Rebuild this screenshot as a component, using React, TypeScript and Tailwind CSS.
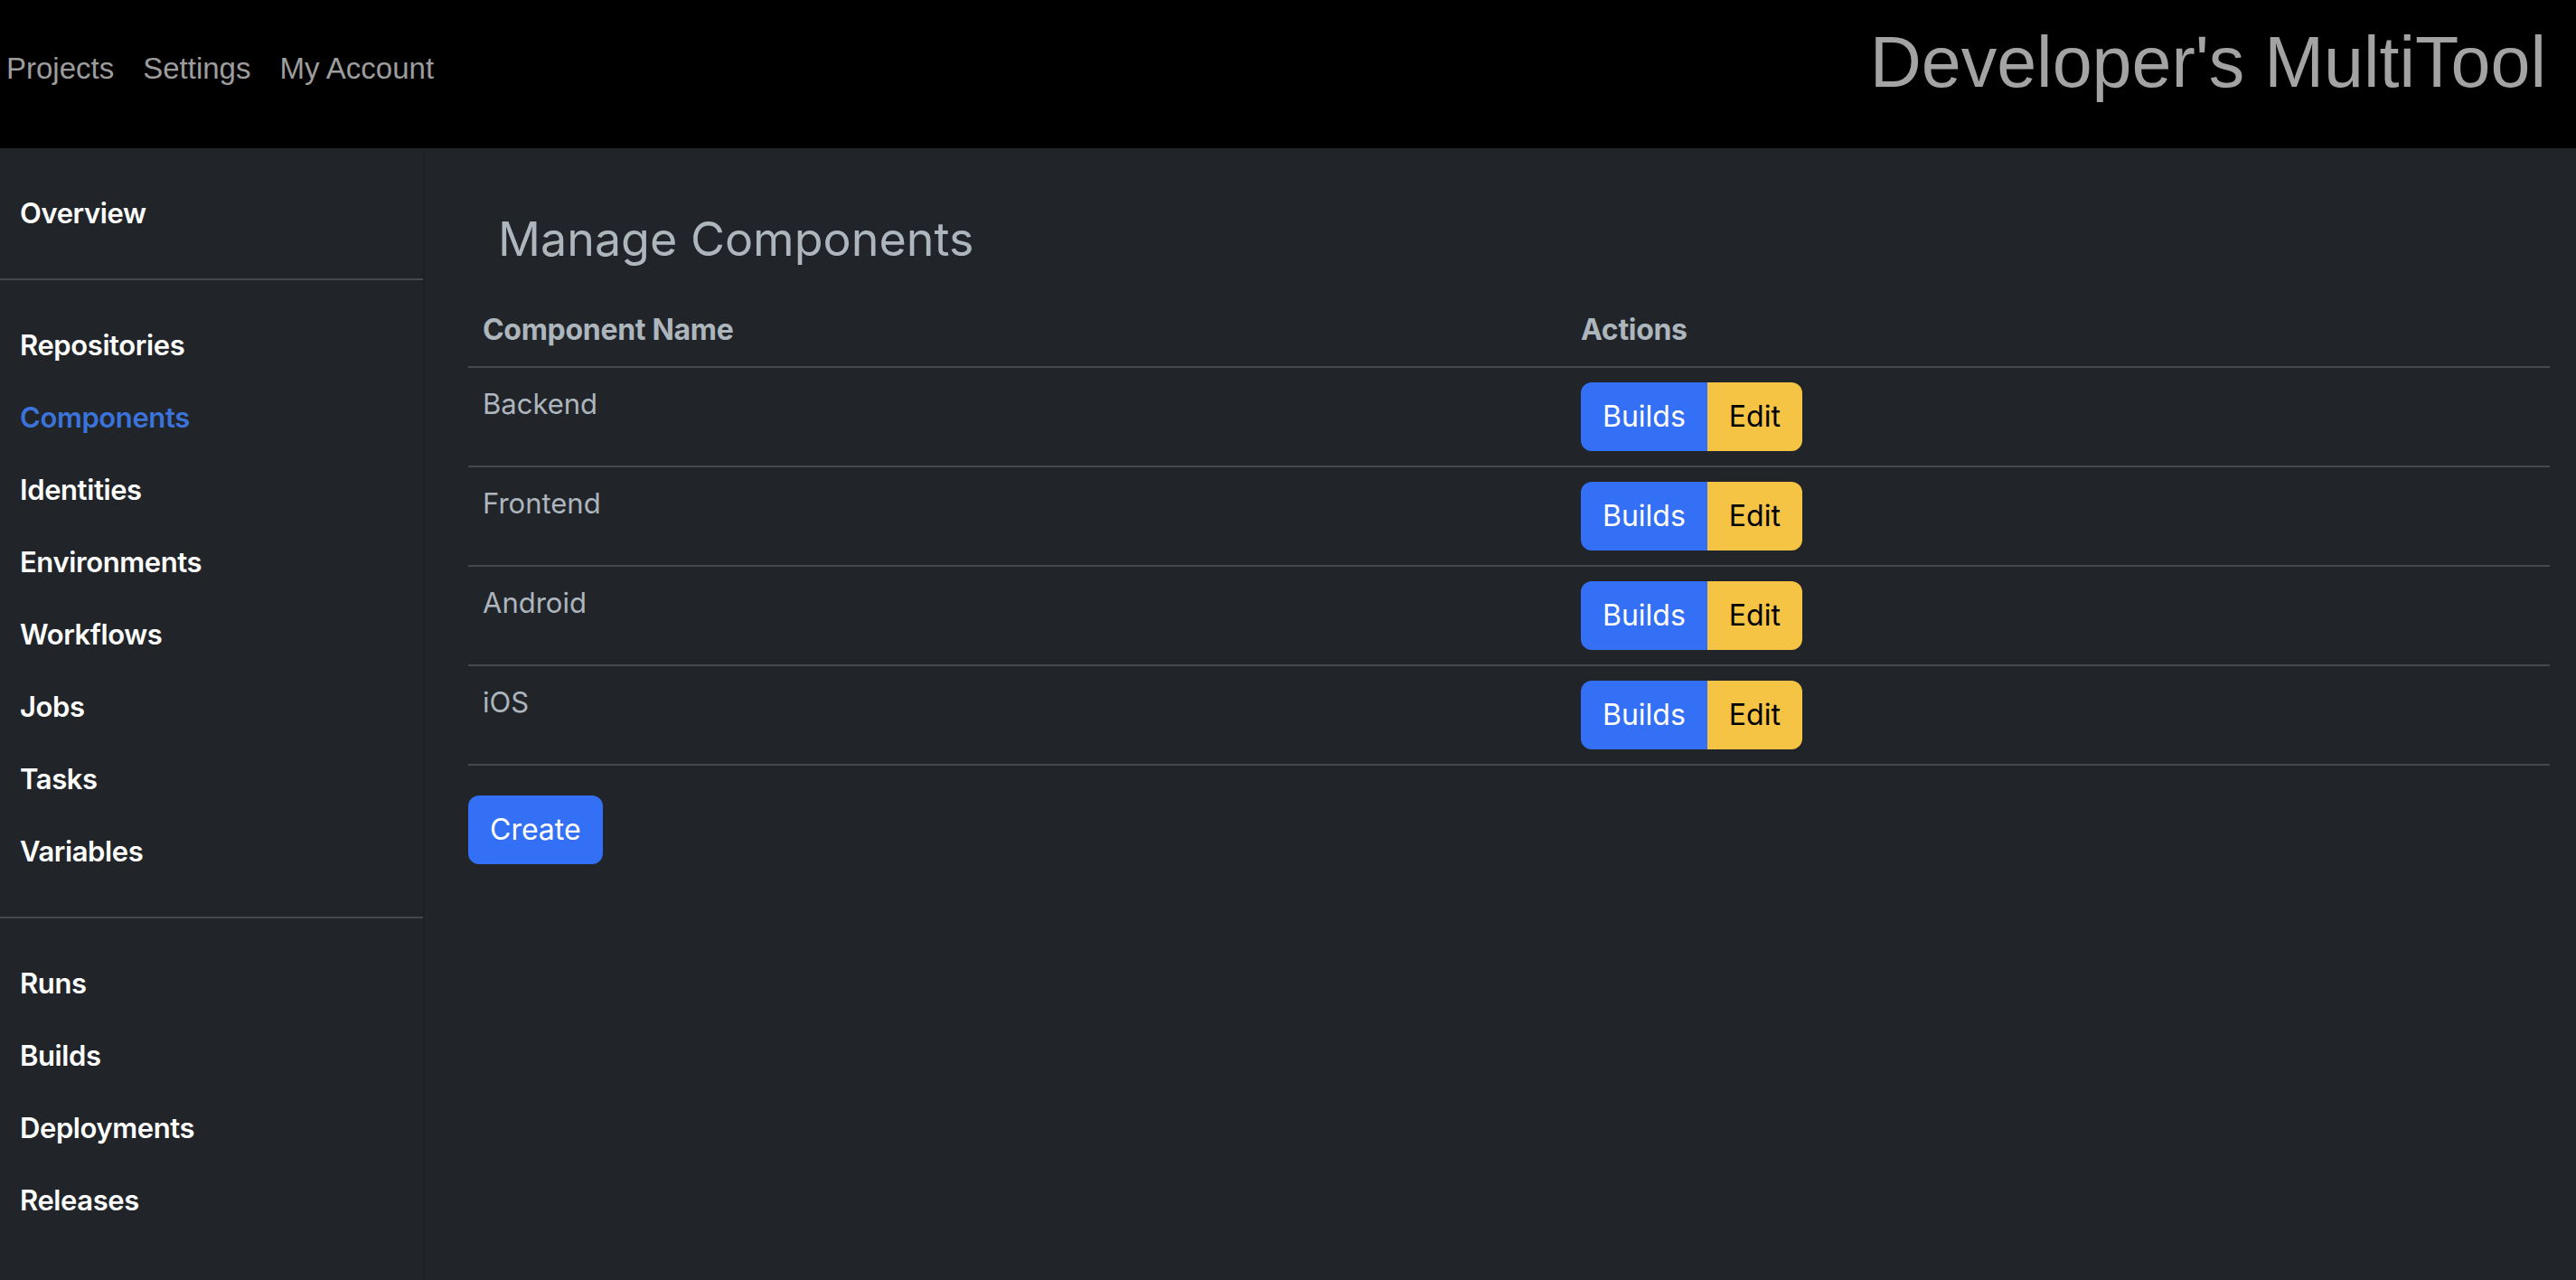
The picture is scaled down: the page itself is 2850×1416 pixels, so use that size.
import React from 'react';

const NAV = ['Projects', 'Settings', 'My Account'];

const SIDEBAR_GROUPS = [
  ['Overview'],
  ['Repositories', 'Components', 'Identities', 'Environments', 'Workflows', 'Jobs', 'Tasks', 'Variables'],
  ['Runs', 'Builds', 'Deployments', 'Releases'],
];

const COMPONENTS = ['Backend', 'Frontend', 'Android', 'iOS'];

const sans = "font-['Inter','Noto_Sans',sans-serif]";
const helv = "font-['Liberation_Sans','Arial',sans-serif]";

export default function App() {
  const active = 'Components';

  return (
    <div className="min-h-[1416px] flex flex-col bg-[#212529]">
      <header className={`h-[164px] bg-black flex items-start justify-between ${helv}`}>
        <nav className="flex gap-[32px] pl-[7px] pt-[56px]">
          {NAV.map((n) => (
            <a key={n} className="text-[33px] leading-[40px] text-[#9d9d9d]">
              {n}
            </a>
          ))}
        </nav>
        <div className="pt-[24px] pr-[33px] text-[79px] leading-[90px] text-[#a3a3a3]">
          Developer's MultiTool
        </div>
      </header>

      <div className={`flex flex-1 ${sans}`}>
        <aside className="w-[470px] shrink-0 border-r-2 border-[#1d2024] pt-[32px]">
          {SIDEBAR_GROUPS.map((group, gi) => (
            <div key={gi}>
              {gi > 0 && <div className="my-[32px] h-[2px] bg-[#45494e]" />}
              {group.map((item) => (
                <a
                  key={item}
                  className={`h-[80px] flex items-center px-[22px] text-[31px] tracking-[-0.4px] font-semibold ${
                    item === active ? 'text-[#3b73da]' : 'text-white'
                  }`}
                >
                  {item}
                </a>
              ))}
            </div>
          ))}
        </aside>

        <main className="flex-1 pl-[48px] pr-[29px] pt-[67px]">
          <h3 className="pl-[33px] mb-[27px] text-[52px] leading-[67px] font-normal text-[#adb5bd]">
            Manage Components
          </h3>

          <table className="w-full border-collapse text-[31px] text-[#adb5bd]">
            <thead>
              <tr className="border-b-2 border-[#45494e]">
                <th className="w-[1215px] px-[16px] py-[16px] text-left font-bold text-[32px] tracking-[-0.3px] leading-[48px]">
                  Component Name
                </th>
                <th className="px-[16px] py-[16px] text-left font-bold text-[32px] tracking-[-0.3px] leading-[48px]">
                  Actions
                </th>
              </tr>
            </thead>
            <tbody>
              {COMPONENTS.map((c) => (
                <tr key={c} className="border-b-2 border-[#45494e]">
                  <td className="px-[16px] py-[16px] align-top leading-[48px]">{c}</td>
                  <td className="px-[16px] py-[16px] align-top">
                    <div className="flex">
                      <button className="h-[76px] px-[24px] rounded-l-[12px] bg-[#3370f5] text-white text-[32px] leading-[48px]">
                        Builds
                      </button>
                      <button className="h-[76px] px-[24px] rounded-r-[12px] bg-[#f5c444] text-black text-[32px] leading-[48px]">
                        Edit
                      </button>
                    </div>
                  </td>
                </tr>
              ))}
            </tbody>
          </table>

          <button className="mt-[33px] h-[76px] px-[24px] rounded-[12px] bg-[#3370f5] text-white text-[32px] leading-[48px]">
            Create
          </button>
        </main>
      </div>
    </div>
  );
}
